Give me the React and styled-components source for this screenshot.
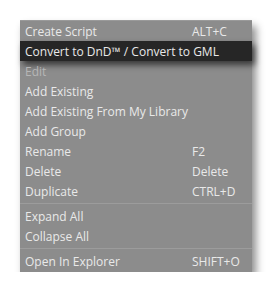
import { Fragment } from "react";
import styled, { createGlobalStyle } from "styled-components";

const Global = createGlobalStyle`
  html, body {
    margin: 0;
    background: #ffffff;
  }
  body {
    font-family: "Open Sans", "Noto Sans", sans-serif;
  }
`;

const Page = styled.div`
  padding: 20px 0 0 20px;
`;

const Menu = styled.ul`
  list-style: none;
  margin: 0;
  padding: 0 0 1px;
  width: 232px;
  background: #8c8c8c;
  border-top: 1px solid #9a9a9a;
  box-shadow: 4px 6px 8px rgba(0, 0, 0, 0.45);
`;

const Item = styled.li`
  display: grid;
  grid-template-columns: 167px 1fr;
  align-items: center;
  height: 20px;
  padding-left: 5px;
  font-size: 12px;
  color: ${(p) => (p.$disabled ? "#b6b6b6" : "#e9e9e9")};
  background: ${(p) => (p.$active ? "#262626" : "transparent")};
  box-shadow: ${(p) => (p.$active ? "3px 4px 6px rgba(0, 0, 0, 0.6)" : "none")};
  position: relative;
  white-space: nowrap;
`;

const Shortcut = styled.span`
  letter-spacing: 0;
`;

const Separator = styled.li`
  height: 1px;
  margin: 2px 0;
  background: #9c9c9c;
`;

const groups = [
  [
    ["Create Script", "ALT+C"],
    ["Convert to DnD™ / Convert to GML", "", "active"],
    ["Edit", "", "disabled"],
    ["Add Existing"],
    ["Add Existing From My Library"],
    ["Add Group"],
    ["Rename", "F2"],
    ["Delete", "Delete"],
    ["Duplicate", "CTRL+D"],
  ],
  [["Expand All"], ["Collapse All"]],
  [["Open In Explorer", "SHIFT+O"]],
];

export default function App() {
  return (
    <>
      <Global />
      <Page>
        <Menu>
          {groups.map((group, gi) => (
            <Fragment key={gi}>
              {gi > 0 && <Separator />}
              {group.map(([label, key, state]) => (
                <Item
                  key={label}
                  $active={state === "active"}
                  $disabled={state === "disabled"}
                >
                  <span>{label}</span>
                  <Shortcut>{key}</Shortcut>
                </Item>
              ))}
            </Fragment>
          ))}
        </Menu>
      </Page>
    </>
  );
}
